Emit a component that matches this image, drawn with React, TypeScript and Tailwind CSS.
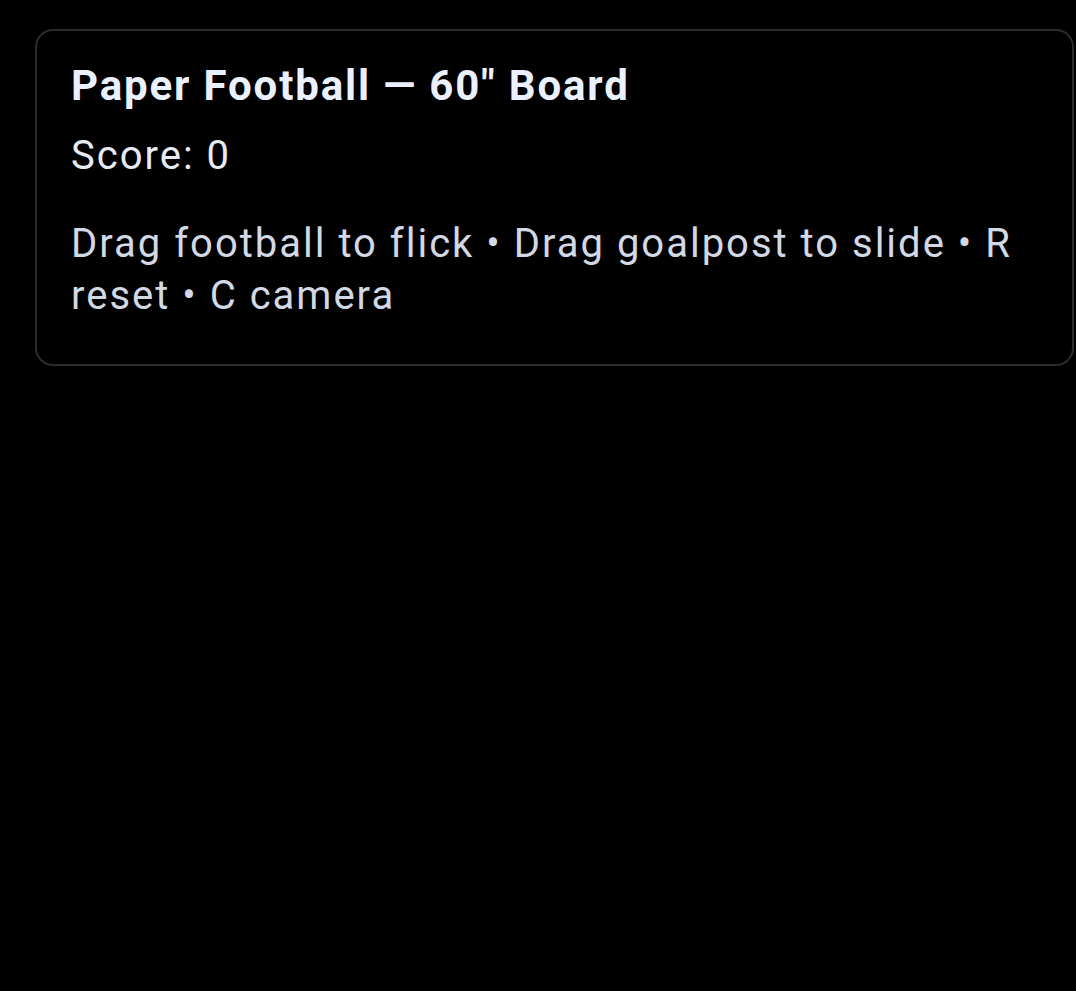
export default function App() {
  return (
    <div className="min-h-[991px] w-full bg-black pt-[29px] pl-[35px]" style={{ fontFamily: "Roboto, 'Noto Sans', sans-serif" }}>
      <div className="w-[1039px] rounded-[18px] border-2 border-[#2b2b2d] bg-black pl-[34px] pr-[30px] pt-[30px] pb-[42px]">
        <h1 className="text-[42px] font-bold leading-[50px] tracking-[1.85px] text-[#eaf0fc]">
          Paper Football — 60" Board
        </h1>
        <div className="mt-[19px] text-[40px] leading-[52px] tracking-[2px] text-[#e6ebf3]">Score: 0</div>
        <p className="mt-[36px] text-[40px] leading-[52px] tracking-[2px] text-[#d3d9e4]">
          Drag football to flick • Drag goalpost to slide • R reset • C camera
        </p>
      </div>
    </div>
  );
}
